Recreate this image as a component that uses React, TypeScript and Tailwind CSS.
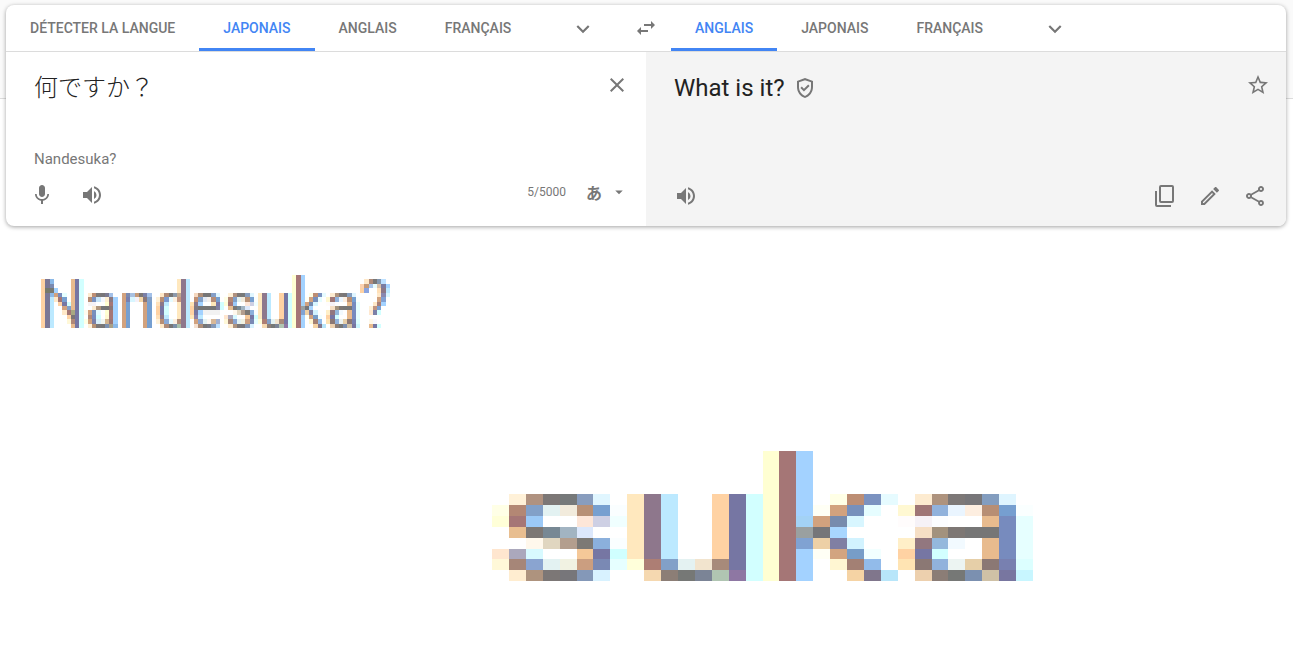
import { useState } from "react";
import type { ReactNode } from "react";
import {
  MdArrowDropDown,
  MdClose,
  MdExpandMore,
  MdMic,
  MdOutlineEdit,
  MdOutlineGppGood,
  MdOutlineShare,
  MdStarBorder,
  MdSwapHoriz,
  MdVolumeUp,
} from "react-icons/md";

/*
 * Each string is one row of magnified screen pixels. A run is written
 * "column:colour,colour,..."; columns outside every run stay blank.
 */
const U = "8:ffe8be,8e778c,bce9ff 13:ffd2a3,7676a3,d2ffff";
const K = "16:ffffd2,a57676,a3d2ff";

const DETAIL: string[] = [
  K,
  K,
  K,
  K,
  `1:fff1d8,b09280,7c7776,76797a,889dbe,e0f6ff ${U} ${K} 20:ffffe6,bd8e74,7b92c0,e6fbff 25:fdebd0,ae937e,7d7877,777679,839dbf,dff5ff`,
  `0:ffffe6,b38774,82a0c8,e3f2f2,f2ebdc,b79076,77a0d0,fafeff ${U} ${K} 19:fffff5,d2a27e,7790bc,e6fdff 24:fff8d2,9f7676,91b2dc,eaf5ff,fdeee0,b78e74,769fd0,faffff`,
  `0:ffffd8,a57676,9bc9f7 5:fde6d8,ced0e4,f0ffff ${U} 16:ffffd2,a57676,a3d2f5,d2a27e,778bad,d8f6ff 24:fffcfc,f6f2f7,fcfdff 29:e8bb8e,778bbe,e6ffff`,
  `1:e8be90,7c7774,778894,a2b4c2,dce8fc ${U} 16:ffffd2,a57676,9aa0a0,767679,a8d6ff 25:f6dfc5,a2927e,7d7774,767676,767676,778bbe,e6ffff`,
  `2:fff8ec,e0d6c0,b39e8e,7c7975,8bb0dc,fafeff ${U} 16:ffffd2,a57676,80a2d2,edd0a6,807fa3,d2f3ff 24:ffefc8,92777f,94b8dc,f2faff 29:e8bb8e,778bbe,e6ffff`,
  `0:ffe6cf,aba8bc,d8faff 5:f5c898,7676a3,d0ffff ${U} ${K} 19:fffff5,d2a480,779dc8,f2ffff 24:ffd2a3,7676a3,d2ffff 29:e8bb8e,778bbe,e6ffff`,
  `0:fff8d8,a68678,8aa4d0,e3f2f2,f1f2e2,cb9e80,7a89b4,e6ffff,ffffda,ad7e74,82a0c8,e4f2f2,f2e4ce,a78a7a,7676a3,d2ffff ${K} 20:fff6d2,a38074,92bbea 24:ffe4b3,8b7874,91b2dc,ecf4f2,e6cfa8,8b7874,7880b0,dcffff`,
  `1:ffedd0,ae937e,7c7776,77767a,8498b8,d8f2ff 9:f5d8b0,8c7e76,767876,7b8496,b0c5b2,8e77a3,d2ffff ${K} 21:f5d3a4,80768c,b8e6fa 25:edd0ae,8b7d76,767876,7b90b0,cfc1a6,7876a0,c8f6ff`,
];

const N_LEFT = "0:ffd2a3,7b7795";
const N_RIGHT = "7:e8bb8e,7676a3,d2ffff";
const N_STEMS = "19:d2a27e,769fd0 24:d2a27e,769fd0";
const D_STEM = "32:ffe8be,8e778c,bce9ff";

const WORD_START: string[] = [
  "",
  `${N_LEFT},8bb9e8 ${N_RIGHT} ${D_STEM} 76:ffe8c8,b08a78,777676,8498b0,bce0ff`,
  `${N_LEFT},7b8ab0 ${N_RIGHT} ${D_STEM} 75:fdd2b0,c59a78,a8c4ea,e8fcfc,d8c0a8,7b7ca0,a3d2ff`,
  `0:ffd2a3,76786a,787a74,a3d2ff ${N_RIGHT} ${D_STEM} 75:ffd2a3,8aa4e0 79:ffe0b8,8b7888,bce9ff`,
  `${N_LEFT},8bb9e8,d2a27e,778bbe,e6ffff ${N_RIGHT} 11:fdebd0,bd8e74,7d7877,777679,7b7a90,a3c0e8 19:d2a27e,7b8ab0,a8c0e0,c59a78,7c7776,7b80a8,a3c0e8 28:ffe8c8,ae8a78,777676,8b9aac,c0a88e,8e778c,bce9ff 36:f5d8c0,ae8e78,777676,777676,849fc8,e0f6ff 79:ffe8c8,8888b0,d8f6ff`,
  `${N_LEFT},bce9ff,ffe8c8,a27676,769fd0 ${N_RIGHT} 11:b78e74,7b92c0,c8e6fa,f5f8ff,fff0d0,8b7880,a3d2ff 19:d2a27e,7780b0,d8f6ff,f5f0f8,f5d8a8,8b7878,82a0c8 27:fff1d8,b78e74,7b9ad0,e6fbff,fdf0e0,c5967e,8e778c,bce9ff 36:c09074,82a0c8,e3eaf5,f5f0ec,b78e78,769fd0 79:d2a27e,82a0d2`,
  `${N_LEFT},bce9ff 4:ffd2a3,7677a3,d2ffff ${N_RIGHT} 11:f6f2f2,f6f2f7 15:ffffd2,a57676,a3d2ff ${N_STEMS} 27:ffe0b8,8b7888,bce9ff ${D_STEM} 35:ffe4b3,8b7888,a3d2ff 40:ffe8b8,7b7aa8,d2ffff 78:ffe8c8,a88078,a3d2ff`,
  `${N_LEFT},bce9ff 5:d2a27e,82a0c8 ${N_RIGHT} 12:fdebd0,b0967e,767676,767676,8b7676,a3d2ff ${N_STEMS} 27:ffd2a3,7676a3,d2ffff ${D_STEM} 35:ffd2a3,7d7880,767676,767676,767676,767676,8080a0,d2ffff 77:fff1d8,c09480,7ba0d2`,
  `${N_LEFT},bce9ff 5:ffe8c8,a27676,a8a882,7676a3,d2ffff 10:fffcf0,d2a27e,7790bc,e6fbff 15:ffffd2,a57676,a3d2ff ${N_STEMS} 27:ffd2a3,7676a3,d2ffff ${D_STEM} 35:ffd2a3,7676a0,a3d2ff,f2f2f2,f2f2f2,f2f2f2,f2f2f2 77:ffe8d0,7b80a8,d2ffff`,
  `${N_LEFT},bce9ff 6:ffd2a3,7b7676,7676a3,d2ffff 11:b08878,778bbe,d2ffff 15:fff8d2,a57676,a3d2ff ${N_STEMS} 27:ffe0b8,8b7888,bce9ff ${D_STEM} 35:ffe8b8,8b80a8,bce9ff`,
  `${N_LEFT},bce9ff 6:fff8d8,b08878,7676a3,d2ffff,ffffe6,d2a27e,7b80a8,d8f0fa,f2f6f0,d2b48e,9b7676,a3d2ff ${N_STEMS} 27:fff1d8,b78e74,8aaad8,e6fbff,fdf0e0,b08c78,8e778c,bce9ff 36:d2a27e,8aa4d0,e3f2f2,fdf6f0,d8b898,a3b0d0 77:fff8e8,f8f8ff`,
  `${N_LEFT},bce9ff ${N_RIGHT} 11:fff1d8,b89274,7c7776,777676,7b90b0,a8a088,8bb9e8 ${N_STEMS} 28:ffe8c8,ae8a78,777676,7b90a8,a8c0a8,8e778c,bce9ff 36:f5e0d0,ae8e78,767676,777a84,8498b8,bce0ff 77:e8bb8e,7676a3,d2ffff`,
];

type Cell = { x: number; y: number; fill: string };

function cellsOf(rows: string[], shift = 0): Cell[] {
  return rows.flatMap((row, y) =>
    row
      .split(" ")
      .filter(Boolean)
      .flatMap((run) => {
        const [start, colours] = run.split(":");
        return colours
          .split(",")
          .map((c, i) => ({ x: Number(start) + i + shift, y, fill: `#${c}` }));
      }),
  );
}

const DETAIL_CELLS = cellsOf(DETAIL);
const WORD_CELLS = [...cellsOf(WORD_START), ...cellsOf(DETAIL, 43)];

function PixelGrid({
  cells,
  columns,
  label,
  className,
}: {
  cells: Cell[];
  columns: number;
  label: string;
  className: string;
}) {
  return (
    <svg
      role="img"
      aria-label={label}
      viewBox={`0 0 ${columns} 12`}
      preserveAspectRatio="none"
      shapeRendering="crispEdges"
      className={className}
    >
      {cells.map((c, i) => (
        <rect key={i} x={c.x} y={c.y} width="1" height="1" fill={c.fill} />
      ))}
    </svg>
  );
}

function IconButton({
  label,
  children,
  className = "",
}: {
  label: string;
  children: ReactNode;
  className?: string;
}) {
  return (
    <button
      type="button"
      aria-label={label}
      className={`flex shrink-0 items-center justify-center ${className}`}
    >
      {children}
    </button>
  );
}

function Tabs({
  label,
  items,
  initial,
}: {
  label: string;
  items: string[];
  initial: string;
}) {
  const [active, setActive] = useState(initial);
  return (
    <div className="flex min-w-0 flex-1">
      <div role="tablist" aria-label={label} className="flex">
        {items.map((item) => (
          <button
            key={item}
            type="button"
            role="tab"
            aria-selected={item === active}
            onClick={() => setActive(item)}
            className={`border-b-3 px-6 pt-0.5 text-sm font-medium whitespace-nowrap ${
              item === active
                ? "border-[#4285f4] text-[#4285f4]"
                : "border-transparent text-[#777]"
            }`}
          >
            {item}
          </button>
        ))}
      </div>
      <IconButton label="Plus de langues" className="ml-6 w-12 pt-0.5">
        <MdExpandMore size={26} />
      </IconButton>
    </div>
  );
}

function CopyIcon() {
  return (
    <svg
      width="24"
      height="24"
      viewBox="0 0 24 24"
      fill="none"
      stroke="currentColor"
      strokeWidth="2"
      strokeLinejoin="round"
    >
      <rect x="7" y="2" width="13" height="16" rx="1" />
      <path d="M3 7v14a1 1 0 0 0 1 1h14" />
    </svg>
  );
}

export default function App() {
  const [source, setSource] = useState("何ですか？");
  return (
    <div className="relative min-h-screen bg-white font-[Roboto,'Noto_Sans_CJK_JP',sans-serif] text-[#777]">
      <div className="absolute inset-x-0 top-0 h-[99px] border-b border-[#dcdcdc] bg-[#fafafa]" />

      <main className="relative pt-[5px] pr-[7px] pl-[6px]">
        <section className="overflow-hidden rounded-lg bg-white shadow-[0_1px_4px_rgba(0,0,0,0.37)]">
          <div className="flex h-[47px] border-b border-[#dcdcdc]">
            <Tabs
              label="Langue source"
              items={["DÉTECTER LA LANGUE", "JAPONAIS", "ANGLAIS", "FRANÇAIS"]}
              initial="JAPONAIS"
            />
            <IconButton label="Inverser les langues" className="w-[50px]">
              <MdSwapHoriz size={24} />
            </IconButton>
            <Tabs
              label="Langue cible"
              items={["ANGLAIS", "JAPONAIS", "FRANÇAIS"]}
              initial="ANGLAIS"
            />
          </div>

          <div className="grid grid-cols-2">
            <div className="flex flex-col pb-[19px] pl-7">
              <div className="flex items-start justify-between pt-4 pr-3">
                <textarea
                  aria-label="Texte source"
                  rows={1}
                  value={source}
                  onChange={(e) => setSource(e.target.value)}
                  className="h-9 flex-1 resize-none overflow-hidden font-['Noto_Sans_CJK_JP',sans-serif] text-2xl leading-9 font-light text-[#222] outline-none"
                />
                <IconButton label="Effacer" className="size-[34px]">
                  <MdClose size={24} />
                </IconButton>
              </div>
              <p className="mt-[43px] text-[15px] leading-6">Nandesuka?</p>
              <div className="mt-3 flex items-center justify-between pr-[18px]">
                <div className="flex gap-[26px]">
                  <IconButton label="Saisie vocale" className="-ml-1">
                    <MdMic size={24} />
                  </IconButton>
                  <IconButton label="Écouter">
                    <MdVolumeUp size={24} />
                  </IconButton>
                </div>
                <div className="flex items-center pb-1.5">
                  <span className="mr-5 text-xs">5/5000</span>
                  <button
                    type="button"
                    aria-label="Outils de saisie"
                    className="mr-2 font-['Noto_Sans_CJK_JP',sans-serif] text-base leading-4 font-bold"
                  >
                    あ
                  </button>
                  <IconButton label="Choisir un outil de saisie">
                    <MdArrowDropDown size={18} />
                  </IconButton>
                </div>
              </div>
            </div>

            <div className="flex flex-col justify-between bg-[#f4f4f4] pb-[18px] pl-7">
              <div className="flex items-start justify-between pt-4 pr-4">
                <p className="flex items-center gap-2 text-2xl leading-10 text-[#222]">
                  What is it?
                  <MdOutlineGppGood size={24} className="text-[#777]" />
                </p>
                <IconButton label="Enregistrer" className="h-[34px] w-6">
                  <MdStarBorder size={24} />
                </IconButton>
              </div>
              <div className="flex items-center justify-between pr-[19px]">
                <IconButton label="Écouter la traduction">
                  <MdVolumeUp size={24} />
                </IconButton>
                <div className="flex gap-[21px]">
                  <IconButton label="Copier">
                    <CopyIcon />
                  </IconButton>
                  <IconButton label="Suggérer une modification">
                    <MdOutlineEdit size={24} />
                  </IconButton>
                  <IconButton label="Partager">
                    <MdOutlineShare size={24} />
                  </IconButton>
                </div>
              </div>
            </div>
          </div>
        </section>

        <PixelGrid
          cells={WORD_CELLS}
          columns={82}
          label="Nandesuka?"
          className="mt-[49px] ml-[35px] h-[53px] w-[349px]"
        />
        <PixelGrid
          cells={DETAIL_CELLS}
          columns={32}
          label="suka"
          className="mt-[123px] ml-[38%] h-[130px] w-[541px]"
        />
      </main>
    </div>
  );
}
